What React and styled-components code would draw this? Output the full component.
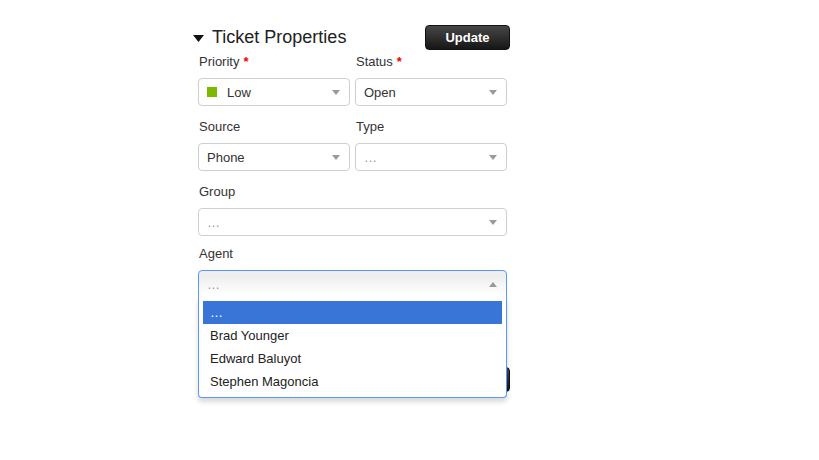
import React from 'react';
import styled, { createGlobalStyle } from 'styled-components';

const GlobalStyle = createGlobalStyle`
    body{
        margin: 0;
        background: #fff;
        font-family: "Liberation Sans", Arial, sans-serif;
        color: #333;
    }
`;

const agents = ['…', 'Brad Younger', 'Edward Baluyot', 'Stephen Magoncia'];

function Caret({ up }) {
    return (
        <CaretSvg viewBox="0 0 8 5" up={up ? 1 : 0}>
            <path d="M0 0 L8 0 L4 5 Z" fill="#9a9a9a" />
        </CaretSvg>
    );
}

function Select({ value, placeholder, swatch, open }) {
    return (
        <SelectBox open={open}>
            {swatch && <Swatch color={swatch} />}
            <SelectText placeholder={placeholder ? 1 : 0}>{value}</SelectText>
            <Caret up={open} />
        </SelectBox>
    );
}

function Field({ label, required, children, tight }) {
    return (
        <FieldWrap tight={tight ? 1 : 0}>
            <Label>
                {label}
                {required && <Star>*</Star>}
            </Label>
            {children}
        </FieldWrap>
    );
}

export default function App() {
    return (
        <Page>
            <GlobalStyle />
            <Header>
                <Title>
                    <svg width="11" height="7" viewBox="0 0 11 7">
                        <path d="M0 0 L11 0 L5.5 7 Z" fill="#111" />
                    </svg>
                    Ticket Properties
                </Title>
                <DarkButton>Update</DarkButton>
            </Header>
            <Form>
                <Row>
                    <Field label="Priority" required>
                        <Select value="Low" swatch="#7cba00" />
                    </Field>
                    <Field label="Status" required>
                        <Select value="Open" />
                    </Field>
                </Row>
                <Row>
                    <Field label="Source">
                        <Select value="Phone" />
                    </Field>
                    <Field label="Type">
                        <Select value="…" placeholder />
                    </Field>
                </Row>
                <Field label="Group" tight>
                    <Select value="…" placeholder />
                </Field>
                <Field label="Agent">
                    <DropWrap>
                        <Select value="…" placeholder open />
                        <Dropdown>
                            {agents.map((a, i) => (
                                <Option key={a} active={i === 0 ? 1 : 0}>{a}</Option>
                            ))}
                        </Dropdown>
                    </DropWrap>
                </Field>
            </Form>
            <Footer>
                <DarkButton>Update</DarkButton>
            </Footer>
        </Page>
    );
}

const Page = styled.div`
    box-sizing: border-box;
    width: 510px;
    min-height: 460px;
    padding: 25px 0 0 193px;
`;

const Header = styled.div`
    display: flex;
    justify-content: space-between;
    align-items: center;
    height: 25px;
`;

const Title = styled.h3`
    margin: 0;
    display: flex;
    align-items: center;
    gap: 8px;
    font-size: 18px;
    font-weight: normal;
    color: #222;
    svg{
        margin-top: 1px;
    }
`;

const DarkButton = styled.button`
    width: 85px;
    height: 25px;
    border: 1px solid #111;
    border-radius: 4px;
    background: linear-gradient(#474747, #161616);
    color: #fff;
    font-family: inherit;
    font-size: 13px;
    font-weight: bold;
    cursor: pointer;
`;

const Form = styled.div`
    position: relative;
    z-index: 2;
    width: 309px;
    margin: 3px 0 0 5px;
    display: flex;
    flex-direction: column;
`;

const Row = styled.div`
    display: grid;
    grid-template-columns: 152px 152px;
    column-gap: 5px;
`;

const FieldWrap = styled.div`
    display: flex;
    flex-direction: column;
    margin-bottom: ${p => (p.tight ? '9px' : '12px')};
`;

const Label = styled.div`
    font-size: 13px;
    line-height: 18px;
    padding-left: 1px;
    margin-bottom: 7px;
    color: #333;
`;

const Star = styled.span`
    color: #e00;
    font-weight: bold;
    margin-left: 4px;
`;

const DropWrap = styled.div`
    position: relative;
`;

const SelectBox = styled.div`
    box-sizing: border-box;
    height: 28px;
    display: flex;
    align-items: center;
    padding: 0 8px;
    border: 1px solid ${p => (p.open ? '#5897fb' : '#cfcfcf')};
    border-radius: ${p => (p.open ? '4px 4px 0 0' : '4px')};
    background: ${p => (p.open ? 'linear-gradient(#eee 20%, #fff 90%)' : '#fff')};
    font-size: 13px;
    color: #333;
`;

const Swatch = styled.span`
    width: 10px;
    height: 10px;
    background: ${p => p.color};
    margin-right: 10px;
`;

const SelectText = styled.span`
    flex: 1;
    color: ${p => (p.placeholder ? '#999' : '#333')};
`;

const CaretSvg = styled.svg`
    width: 8px;
    height: 5px;
    margin-right: 1px;
    transform: ${p => (p.up ? 'rotate(180deg)' : 'none')};
`;

const Dropdown = styled.ul`
    box-sizing: border-box;
    position: absolute;
    left: 0;
    right: 0;
    top: 27px;
    height: 101px;
    margin: 0;
    padding: 4px;
    list-style: none;
    background: #fff;
    border: 1px solid #5897fb;
    border-top: 0;
    border-radius: 0 0 4px 4px;
    box-shadow: 0 4px 5px rgba(0, 0, 0, 0.15);
`;

const Option = styled.li`
    height: 23px;
    line-height: 23px;
    padding-left: 7px;
    font-size: 13px;
    color: ${p => (p.active ? '#fff' : '#222')};
    background: ${p => (p.active ? '#3875d7' : 'transparent')};
`;

const Footer = styled.div`
    display: flex;
    justify-content: flex-end;
    margin-top: 57px;
`;
